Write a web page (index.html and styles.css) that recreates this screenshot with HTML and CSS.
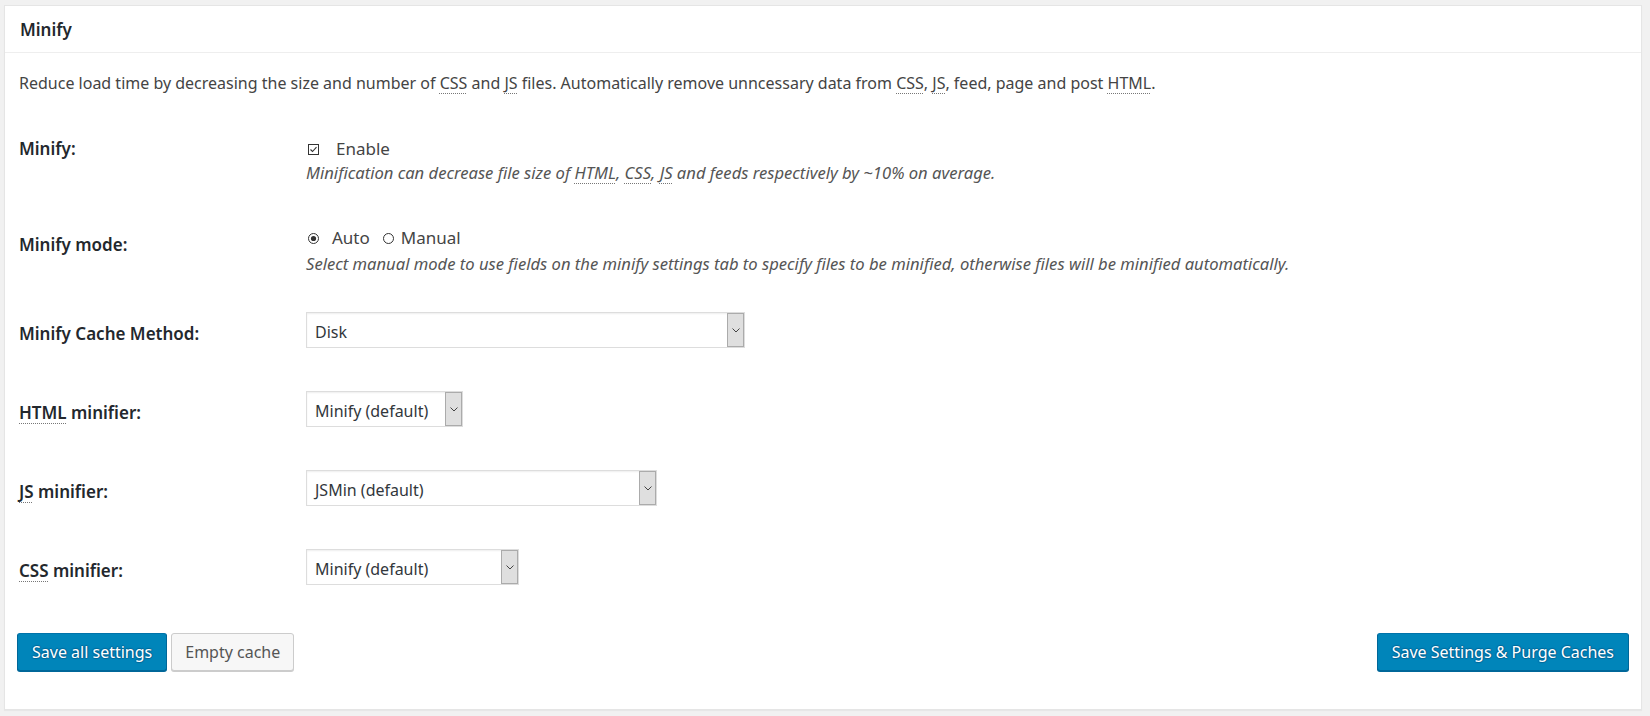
FILE: index.html
```html
<!DOCTYPE html>
<html lang="en">
<head>
  <meta charset="UTF-8">
  <title>Minify</title>
  <link rel="stylesheet" href="styles.css">
</head>
<body>

<div class="postbox">
  <h3 class="postbox-title">Minify</h3>

  <div class="inside">
    <p class="intro">Reduce load time by decreasing the size and number of <abbr title="Cascading Style Sheet">CSS</abbr> and <abbr title="JavaScript">JS</abbr> files. Automatically remove unncessary data from <abbr title="Cascading Style Sheet">CSS</abbr>, <abbr title="JavaScript">JS</abbr>, feed, page and post <abbr title="Hypertext Markup Language">HTML</abbr>.</p>

    <!-- minify on/off -->
    <div class="form-row check-row">
      <div class="row-label">Minify:</div>
      <div class="row-field">
        <label class="check-line">
          <svg class="checkbox" width="11" height="11" viewBox="0 0 11 11">
            <rect x="0.5" y="0.5" width="10" height="10" fill="#fff" stroke="#333"/>
            <polyline points="2.5,5.5 4.5,7.5 8.5,3.2" fill="none" stroke="#333" stroke-width="1.1"/>
          </svg>
          Enable
        </label>
        <div class="description">Minification can decrease file size of <abbr title="Hypertext Markup Language">HTML</abbr>, <abbr title="Cascading Style Sheet">CSS</abbr>, <abbr title="JavaScript">JS</abbr> and feeds respectively by ~10% on average.</div>
      </div>
    </div>

    <!-- mode -->
    <div class="form-row check-row">
      <div class="row-label row-label-low">Minify mode:</div>
      <div class="row-field">
        <div class="radio-line">
          <label class="opt">
            <svg class="radio" width="11" height="11" viewBox="0 0 11 11">
              <circle cx="5.5" cy="5.5" r="5" fill="#fff" stroke="#333"/>
              <circle cx="5.5" cy="5.5" r="2.6" fill="#333"/>
            </svg>
            Auto
          </label>
          <label class="opt">
            <svg class="radio" width="11" height="11" viewBox="0 0 11 11">
              <circle cx="5.5" cy="5.5" r="5" fill="#fff" stroke="#333"/>
            </svg>
            Manual
          </label>
        </div>
        <div class="description">Select manual mode to use fields on the minify settings tab to specify files to be minified, otherwise files will be minified automatically.</div>
      </div>
    </div>

    <div class="form-row select-row">
      <div class="row-label">Minify Cache Method:</div>
      <div class="select w-cache"><span class="select-value">Disk</span><span class="select-arrow"><svg width="8" height="5" viewBox="0 0 8 5"><polyline points="0.5,0.5 4,4 7.5,0.5" fill="none" stroke="#444"/></svg></span></div>
    </div>

    <div class="form-row select-row">
      <div class="row-label"><abbr title="Hypertext Markup Language">HTML</abbr> minifier:</div>
      <div class="select w-html"><span class="select-value">Minify (default)</span><span class="select-arrow"><svg width="8" height="5" viewBox="0 0 8 5"><polyline points="0.5,0.5 4,4 7.5,0.5" fill="none" stroke="#444"/></svg></span></div>
    </div>

    <div class="form-row select-row">
      <div class="row-label"><abbr title="JavaScript">JS</abbr> minifier:</div>
      <div class="select w-js"><span class="select-value">JSMin (default)</span><span class="select-arrow"><svg width="8" height="5" viewBox="0 0 8 5"><polyline points="0.5,0.5 4,4 7.5,0.5" fill="none" stroke="#444"/></svg></span></div>
    </div>

    <div class="form-row select-row">
      <div class="row-label"><abbr title="Cascading Style Sheet">CSS</abbr> minifier:</div>
      <div class="select w-css"><span class="select-value">Minify (default)</span><span class="select-arrow"><svg width="8" height="5" viewBox="0 0 8 5"><polyline points="0.5,0.5 4,4 7.5,0.5" fill="none" stroke="#444"/></svg></span></div>
    </div>

    <div class="submit-row">
      <div class="submit-left">
        <button class="button button-primary">Save all settings</button>
        <button class="button">Empty cache</button>
      </div>
      <button class="button button-primary">Save Settings &amp; Purge Caches</button>
    </div>
  </div>
</div>

</body>
</html>
```

FILE: styles.css
```css
body {
  margin: 0;
  padding: 5px 8px 6px 4px;
  background: #f1f1f1;
  font-family: "Noto Sans", "Open Sans", sans-serif;
  font-size: 16px;
  color: #444;
}
abbr {
  text-decoration: underline dotted;
  text-decoration-thickness: 1px;
  text-decoration-color: #777;
  text-underline-offset: 4px;
}

.postbox {
  background: #fff;
  border: 1px solid #e5e5e5;
  box-shadow: 0 1px 1px rgba(0,0,0,0.04);
}
.postbox-title {
  margin: 0;
  height: 46px;
  padding: 0 15px;
  display: flex;
  align-items: center;
  border-bottom: 1px solid #eee;
  font-size: 17px;
  font-weight: 600;
  color: #23282d;
}
.inside { padding: 18px 12px 38px 14px; }

.intro {
  margin: 0 0 17px;
  line-height: 24px;
}

.form-row { display: flex; }
.check-row { padding: 25px 0 14px; }
.select-row { padding: 22px 0 21px; align-items: center; }
.row-label {
  width: 287px;
  flex: none;
  font-size: 17px;
  font-weight: 600;
  line-height: 24px;
  color: #23282d;
}
.select-row .row-label { padding-top: 8px; }
.row-label-low { padding-top: 9px; }

.check-line {
  display: flex;
  align-items: center;
  font-size: 17px;
  line-height: 24px;
}
.checkbox { margin: 0 17px 0 2px; }
.radio-line {
  display: flex;
  align-items: center;
  font-size: 17px;
  line-height: 28px;
}
.opt { display: flex; align-items: center; margin-right: 11px; }
.radio { margin: 0 13px 0 2px; }
.opt + .opt .radio { margin-right: 7px; }
.description {
  font-style: italic;
  font-size: 16.6px;
  line-height: 24px;
  color: #555;
}

.select {
  display: flex;
  height: 36px;
  box-sizing: border-box;
  border: 1px solid #ddd;
  box-shadow: inset 0 1px 2px rgba(0,0,0,0.07);
  background: #fff;
  color: #32373c;
}
.select-value {
  flex: 1;
  padding: 5px 0 0 8px;
  line-height: 29px;
  white-space: nowrap;
  overflow: hidden;
}
.select-arrow {
  width: 15px;
  flex: none;
  background: #dfdfdf;
  border: 1px solid #ababab;
  display: flex;
  align-items: center;
  justify-content: center;
}
.w-cache { width: 439px; }
.w-html { width: 157px; }
.w-js { width: 351px; }
.w-css { width: 213px; }

.submit-row {
  margin: 27px 0 0 -2px;
  display: flex;
  justify-content: space-between;
}
.submit-left { display: flex; gap: 4px; }
.button {
  height: 38px;
  padding: 0 13px;
  border: 1px solid #ccc;
  border-radius: 3px;
  background: #f7f7f7;
  box-shadow: 0 1px 0 #ccc;
  color: #555;
  font-family: inherit;
  font-size: 16px;
  cursor: pointer;
}
.button-primary {
  padding: 0 14px;
  background: #0085ba;
  border-color: #0073aa #006799 #006799;
  box-shadow: 0 1px 0 #006799;
  color: #fff;
  text-shadow: 0 -1px 1px #006799, 1px 0 1px #006799, 0 1px 1px #006799, -1px 0 1px #006799;
}
```
